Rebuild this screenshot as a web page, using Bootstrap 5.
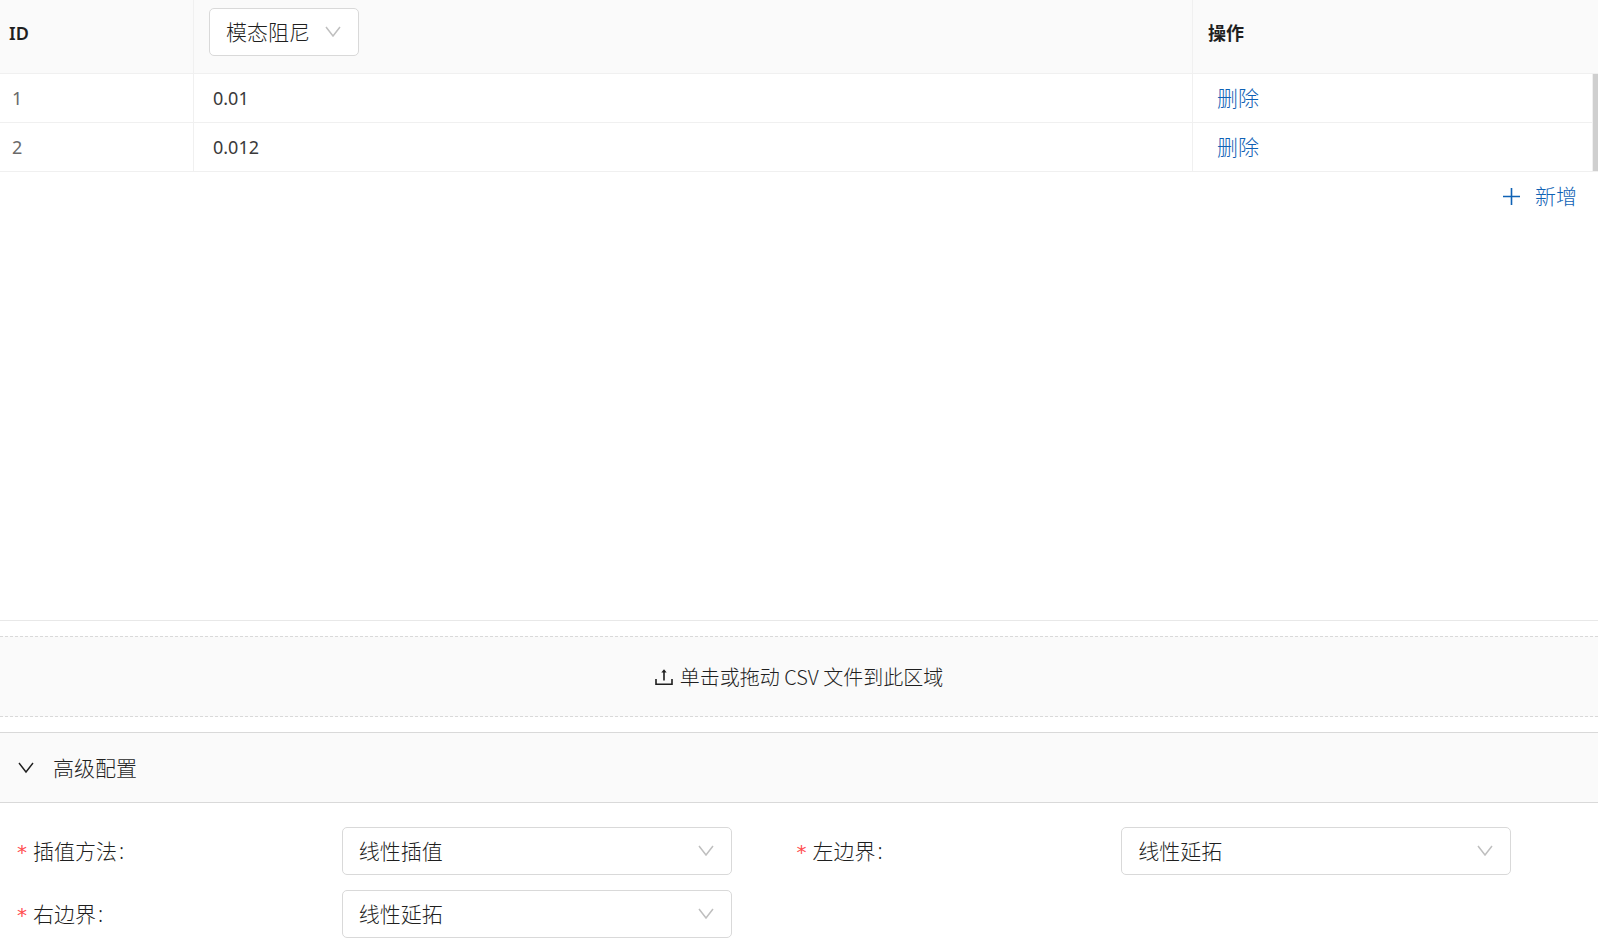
<!DOCTYPE html>
<html lang="zh-CN">
<head>
<meta charset="utf-8">
<meta name="viewport" content="width=device-width, initial-scale=1">
<title>模态阻尼</title>
<link href="https://cdn.jsdelivr.net/npm/bootstrap@5.3.0/dist/css/bootstrap.min.css" rel="stylesheet">
<style>
  :root { --ink: #1f1f1f; --line: #d9d9d9; --soft-line: #f0f0f0; --panel: #fafafa; --blue: #0f62b5; }
  body { font-family: "Noto Sans", "Noto Sans CJK SC", sans-serif; font-weight: 300; font-size: 21px; line-height: 32px; color: var(--ink); }
  .data-area { border-bottom: 1px solid #e8e8e8; }
  .data-table { table-layout: fixed; border-collapse: separate; border-spacing: 0; font-size: 18px; color: var(--ink); }
  .data-table th, .data-table td { background: #fff; border-bottom: 1px solid var(--soft-line); vertical-align: middle; padding: 0 12px; color: var(--ink); }
  .data-table th + th, .data-table td + td { border-left: 1px solid var(--soft-line); }
  .data-table thead th { background: var(--panel); height: 74px; padding: 8px 15px 17px; font-weight: 600; line-height: 48px; }
  .data-table thead th:first-child { padding-left: 9px; }
  .data-table thead th:not(:nth-child(2)) { padding-top: 9px; padding-bottom: 16px; }
  .data-table tbody td { height: 49px; font-weight: 400; color: #3a3a3a; }
  .data-table tbody td:first-child { color: #6a6a6a; }
  .data-table tbody td + td { padding-left: 19px; }
  .data-table tbody td:last-child { padding-left: 24px; }
  .col-id { width: 193px; }
  .col-action { width: 406px; }
  .scroll-thumb { width: 6px; top: 74px; bottom: 1px; background: #cfcfcf; border-left: 1px solid var(--soft-line); }
  .link-btn { color: var(--blue); font-size: 21px; line-height: 32px; font-weight: 300; }
  .add-btn { gap: 14px; padding: 8px 21px; }
  .pick { height: 48px; padding: 0 48px 0 16px; border: 1px solid var(--line); border-radius: 5px; color: var(--ink); font-size: 21px; line-height: 32px; font-weight: 300;
    background-color: #fff; background-position: right 17px center; background-size: 16px 12px;
    background-image: url("data:image/svg+xml,%3Csvg xmlns='http://www.w3.org/2000/svg' viewBox='0 0 16 12' fill='none' stroke='%23bfbfbf' stroke-width='1.5'%3E%3Cpath d='M1 1l7 9 7-9'/%3E%3C/svg%3E"); }
  .pick-head { width: 150px; background-position-x: right 18px; }
  .drop-zone { margin: 15px 0; height: 81px; gap: 7px; background: var(--panel); border: 1px dashed var(--line); border-width: 1px 0; font-size: 20px; font-family: "Noto Sans CJK SC", sans-serif; cursor: pointer; }
  .panel-toggle { height: 71px; gap: 19px; padding: 0 18px; background: var(--panel); border: 1px solid var(--line); border-width: 1px 0; color: var(--ink); font-weight: 300; }
  .settings { padding: 24px 22px 9px 17px; row-gap: 15px; }
  .field-label::before { content: "*"; color: #ff4d4f; margin-right: 6px; font-family: "DejaVu Sans", sans-serif; font-weight: 400; font-size: 20px; line-height: 1; }
  .field-label::after { content: ":"; margin-left: 2px; }
</style>
</head>
<body class="d-flex flex-column min-vh-100 bg-white">
  <main class="data-area flex-grow-1">
    <div class="position-relative">
      <table class="data-table table mb-0">
        <colgroup><col class="col-id"><col><col class="col-action"></colgroup>
        <thead>
          <tr>
            <th scope="col">ID</th>
            <th scope="col"><select class="form-select pick pick-head" aria-label="数据类型"><option>模态阻尼</option></select></th>
            <th scope="col">操作</th>
          </tr>
        </thead>
        <tbody>
          <tr><td>1</td><td>0.01</td><td><button type="button" class="link-btn btn p-0 border-0 d-block">删除</button></td></tr>
          <tr><td>2</td><td>0.012</td><td><button type="button" class="link-btn btn p-0 border-0 d-block">删除</button></td></tr>
        </tbody>
      </table>
      <div class="scroll-thumb position-absolute end-0"></div>
    </div>
    <div class="d-flex justify-content-end">
      <button type="button" class="link-btn add-btn btn border-0 d-flex align-items-center">
        <svg width="19" height="19" viewBox="0 0 19 19" fill="none" stroke="currentColor" stroke-width="1.6" aria-hidden="true"><path d="M9.5 1v17M1 9.5h17"/></svg>
        新增
      </button>
    </div>
  </main>

  <label class="drop-zone d-flex align-items-center justify-content-center">
    <input type="file" accept=".csv" class="d-none">
    <svg width="18" height="18" viewBox="0 0 18 18" fill="none" stroke="currentColor" stroke-width="1.6" aria-hidden="true"><path d="M1 11v5.2h16V11M9 12.5V4"/><path d="M6.3 4.6L9 1.2l2.7 3.4z" fill="currentColor" stroke="none"/></svg>
    <span>单击或拖动 CSV 文件到此区域</span>
  </label>

  <section>
    <button type="button" class="panel-toggle w-100 d-flex align-items-center" data-bs-toggle="collapse" data-bs-target="#advanced" aria-expanded="true" aria-controls="advanced">
      <svg width="16" height="12" viewBox="0 0 16 12" fill="none" stroke="currentColor" stroke-width="1.4" aria-hidden="true"><path d="M1 1l7 9 7-9"/></svg>
      高级配置
    </button>
    <div id="advanced" class="collapse show">
      <form class="settings row gx-0 m-0">
        <div class="col-6">
          <div class="row g-0 align-items-center">
            <label class="field-label col-5" for="method">插值方法</label>
            <div class="col-6"><select id="method" class="form-select pick" required><option>线性插值</option></select></div>
          </div>
        </div>
        <div class="col-6">
          <div class="row g-0 align-items-center">
            <label class="field-label col-5" for="left-edge">左边界</label>
            <div class="col-6"><select id="left-edge" class="form-select pick" required><option>线性延拓</option></select></div>
          </div>
        </div>
        <div class="col-6">
          <div class="row g-0 align-items-center">
            <label class="field-label col-5" for="right-edge">右边界</label>
            <div class="col-6"><select id="right-edge" class="form-select pick" required><option>线性延拓</option></select></div>
          </div>
        </div>
      </form>
    </div>
  </section>
<script src="https://cdn.jsdelivr.net/npm/bootstrap@5.3.0/dist/js/bootstrap.bundle.min.js"></script>
</body>
</html>
